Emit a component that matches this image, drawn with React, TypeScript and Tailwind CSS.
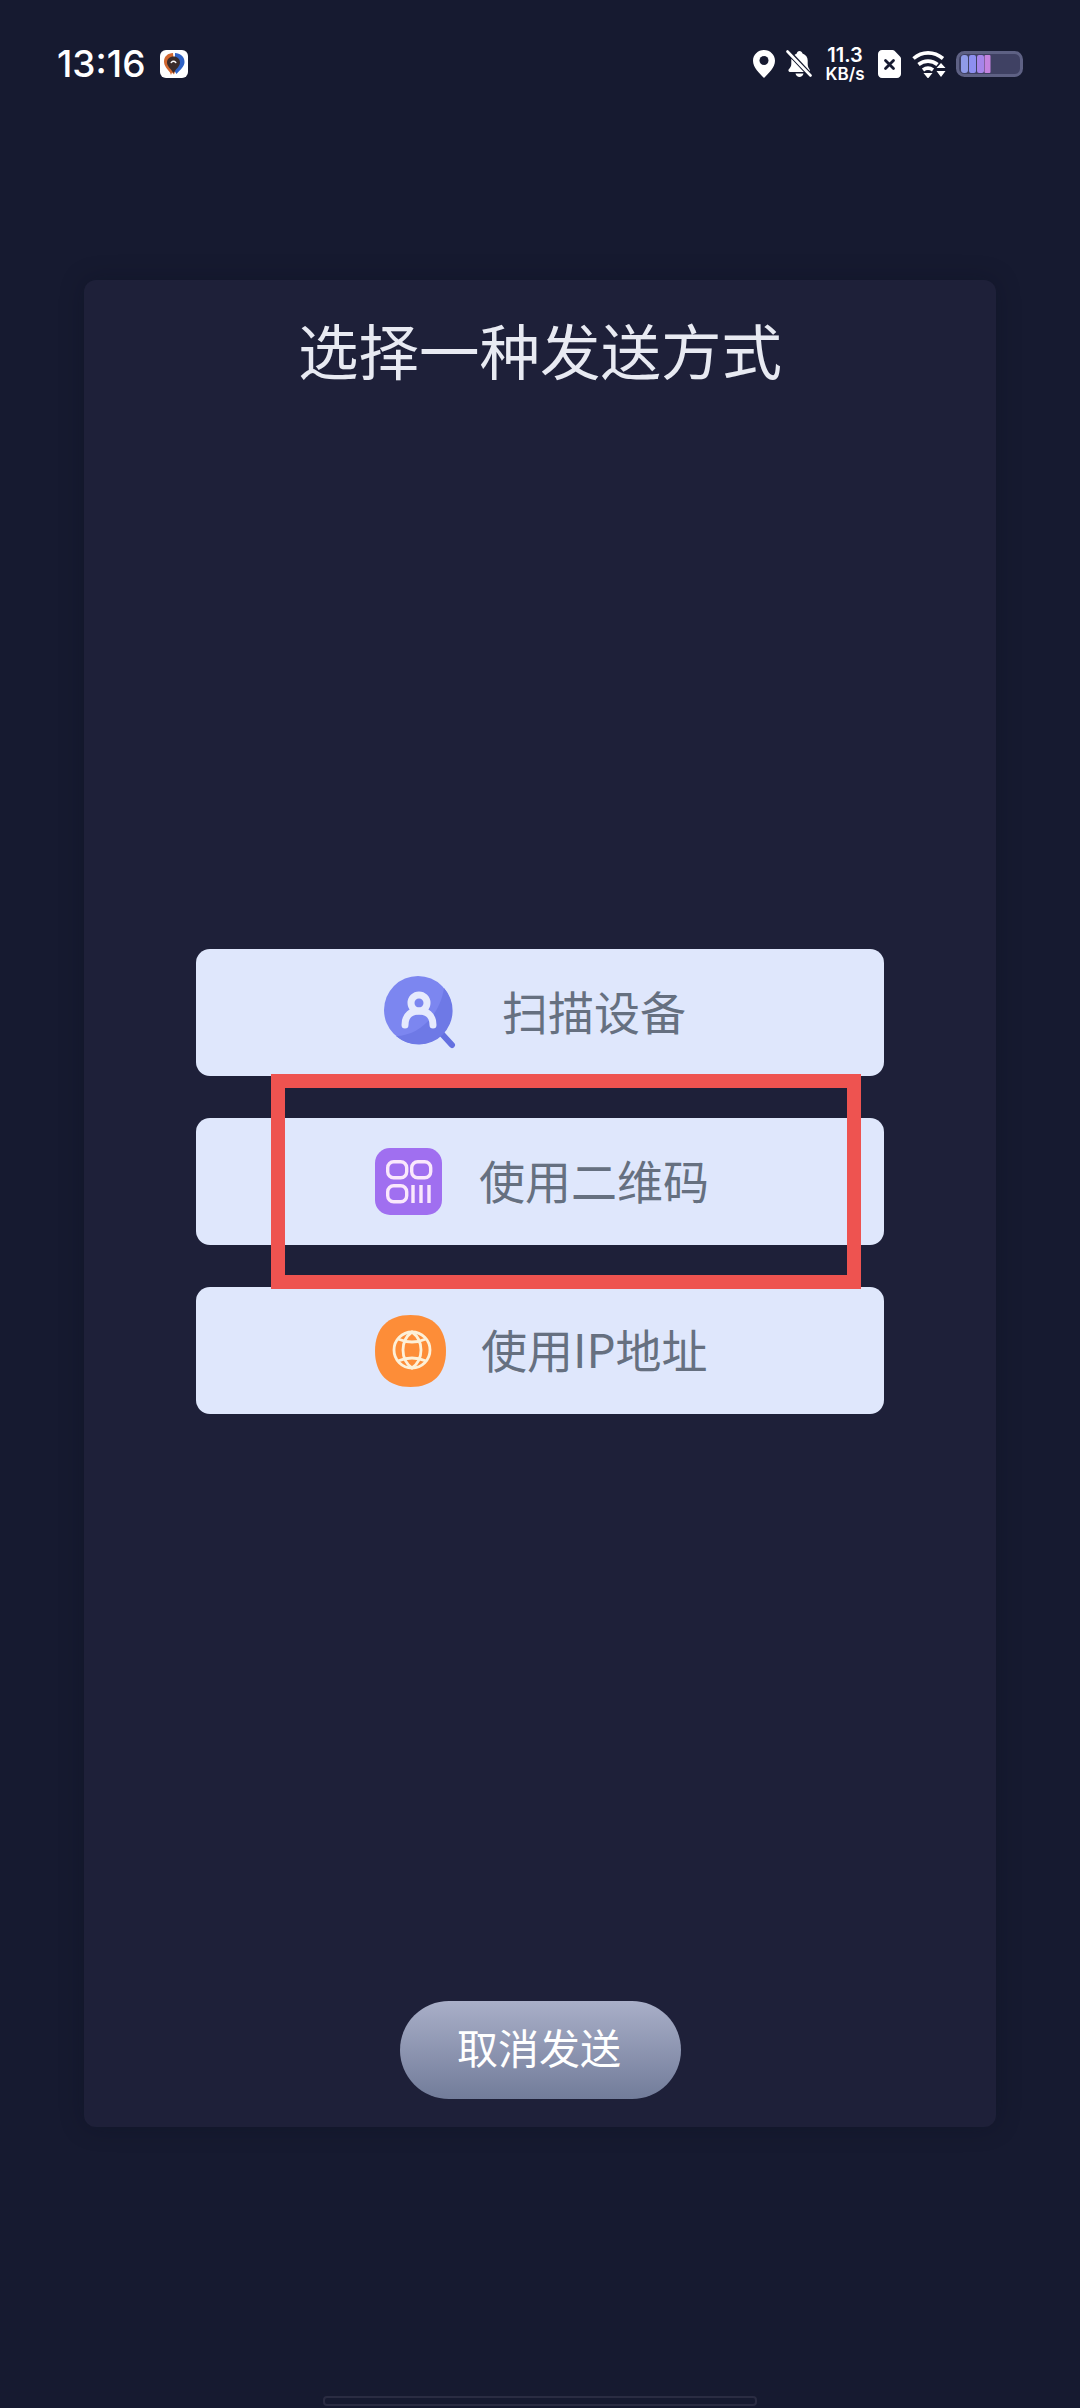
const cjk = "font-['Noto_Sans_CJK_SC','Noto_Sans',sans-serif]";

function AppBadge() {
  return (
    <svg width="28" height="28" viewBox="0 0 28 28">
      <rect width="28" height="28" rx="6" fill="#fff" />
      <path d="M15 3c5 0 9.500 3.500 9.500 9 0 4.500-4.500 8-8 12l-2-3z" fill="#2f62c4" />
      <path d="M13 3C8 3 4 6.500 4 11.500c0 4.500 3.500 7.500 6 11l1 2.500 1-2.500 2 2 1-3z" fill="#d2672f" />
      <path d="M13.500 6.500c3.800 0 6.500 2.500 6.500 6 0 3.500-3.500 6-5 8.500l-1.500 2-1.500-2c-1.500-2.500-5-5-5-8.500 0-3.500 2.700-6 6.500-6z" fill="#3a2c2a" />
      <path d="M11.200 12.500c1.500-1.500 3.100-1.500 4.600 0" fill="none" stroke="#fff" strokeWidth="1.400" strokeLinecap="round" />
    </svg>
  );
}

function PinIcon() {
  return (
    <svg width="22" height="28" viewBox="0 0 22 28">
      <path d="M11 0C4.900 0 0 4.800 0 10.800 0 17.500 6.500 23.500 11 28c4.500-4.500 11-10.500 11-17.200C22 4.800 17.100 0 11 0z" fill="#fff" />
      <circle cx="11" cy="10.500" r="4.500" fill="#161a30" />
    </svg>
  );
}

function BellOffIcon() {
  return (
    <svg width="26" height="28" viewBox="0 0 26 28">
      <path d="M13.500 1c-1.500 0-2.500 1-2.700 2.400C9.500 4 8.500 4.800 7.500 5.800l16 16c.5-.7.500-1.700 0-2.400-.9-1.300-1.800-2.800-1.800-5.400V10.500c0-3.200-1.700-5.900-5.200-7.100C16 2 15 1 13.500 1z" fill="#fff" />
      <path d="M5.600 8.500c-.2.600-.3 1.300-.3 2V14c0 2.400-1.300 3.900-2.500 5.300-.9 1-.2 2.700 1.200 2.700h14.600zM9.500 23.500c.5 2 2.100 3.500 4 3.500s3.500-1.500 4-3.500z" fill="#fff" />
      <path d="M1.500 1 25 26" stroke="#161a30" strokeWidth="5" />
      <path d="M1.500 1.500 24.500 25.500" stroke="#fff" strokeWidth="2.600" strokeLinecap="round" />
    </svg>
  );
}

function SimIcon() {
  return (
    <svg width="23" height="28" viewBox="0 0 23 28">
      <path d="M4 0h10.500c.8 0 1.500.3 2 .8l5.500 5.700c.6.500 1 1.300 1 2V24c0 2.200-1.800 4-4 4H4c-2.200 0-4-1.800-4-4V4c0-2.200 1.800-4 4-4z" fill="#fff" />
      <path d="M7.500 10.500l8 8M15.500 10.500l-8 8" stroke="#161a30" strokeWidth="2.800" strokeLinecap="round" />
    </svg>
  );
}

function WifiIcon() {
  return (
    <svg width="34" height="28" viewBox="0 0 34 28">
      <g fill="none" stroke="#fff" strokeWidth="3.600">
        <path d="M1.500 8.500C10 1 22 1 31 8.500" />
        <path d="M6.500 14.500C12 10 20 10 25.500 14.500" />
        <path d="M11 20c3-2.300 7-2.300 10 0" />
      </g>
      <path d="M11.500 23h9L16 28.500zM29 13l4.500 5h-9zM24.500 21h9L29 27z" fill="#fff" />
    </svg>
  );
}

function BatteryIcon() {
  return (
    <svg width="67" height="26" viewBox="0 0 67 26">
      <rect x="1.500" y="1.500" width="64" height="23" rx="7" fill="#3f4163" stroke="#5e6184" strokeWidth="3" />
      <rect x="5" y="4" width="7" height="18" rx="3" fill="#8f9be8" />
      <rect x="13" y="4" width="7" height="18" rx="2" fill="#8d8ff0" />
      <rect x="21" y="4" width="7" height="18" rx="2" fill="#a685ea" />
      <rect x="28.500" y="4" width="6" height="18" rx="1" fill="#c583df" />
    </svg>
  );
}

function ScanIcon() {
  return (
    <svg width="72" height="74" viewBox="0 0 72 74">
      <path d="M57 57 68 69" stroke="#6470e0" strokeWidth="6" strokeLinecap="round" />
      <circle cx="34" cy="34" r="34" fill="#7c86f0" />
      <path d="M60 12A34 34 0 0 1 12 60C34 60 56 40 60 12z" fill="#6e79e6" />
      <circle cx="35" cy="27" r="8" fill="none" stroke="#e6eafd" strokeWidth="7" />
      <path d="M21 49C21 38 28 35 35 35S49 38 49 49" fill="none" stroke="#e6eafd" strokeWidth="7" strokeLinecap="round" />
    </svg>
  );
}

function QrIcon() {
  return (
    <svg width="67" height="67" viewBox="0 0 67 67">
      <rect width="67" height="67" rx="15" fill="#a06ff0" />
      <g fill="none" stroke="#fae8fc" strokeWidth="3.400">
        <rect x="12.700" y="13.700" width="19" height="16" rx="6" />
        <rect x="36.700" y="13.700" width="19" height="16" rx="6" />
        <rect x="12.700" y="37.700" width="19" height="16" rx="6" />
        <path d="M38 37v18M46 37v18M54 37v18" />
      </g>
    </svg>
  );
}

function GlobeIcon() {
  return (
    <svg width="71" height="72" viewBox="0 0 71 72">
      <path d="M35.500 0C58 0 71 13 71 36S58 72 35.500 72 0 59 0 36 13 0 35.500 0z" fill="#fd8d38" />
      <g fill="none" stroke="#fdf0d8" strokeWidth="2.800">
        <circle cx="37" cy="35" r="18" />
        <path d="M37 17C30 22 28 28 28 35s2 13 9 18C44 48 46 42 46 35s-2-13-9-18z" />
        <path d="M23 24Q37 30 51 24M23 46Q37 40 51 46" />
      </g>
    </svg>
  );
}

const options = [
  { label: "扫描设备", icon: <ScanIcon />, row: "pl-[188px] gap-[46px]" },
  { label: "使用二维码", icon: <QrIcon />, row: "pl-[179px] gap-[37px]" },
  { label: "使用IP地址", icon: <GlobeIcon />, row: "pl-[179px] gap-[35px]" },
];

export default function App() {
  return (
    <div className={`flex h-[2408px] w-[1080px] flex-col overflow-hidden bg-[#161a30] ${cjk}`}>
      {/* Status bar */}
      <div className="flex h-[78px] items-start justify-between px-[57px] pt-[50px]">
        <div className="flex h-[28px] items-center gap-[15px]">
          <span className="font-['Inter',sans-serif] text-[37px] leading-[28px] font-medium text-white">13:16</span>
          <AppBadge />
        </div>
        <div className="flex h-[28px] items-center">
          <PinIcon />
          <div className="ml-[11px]"><BellOffIcon /></div>
          <div className="ml-[14px] flex w-[38px] flex-col items-center font-['Inter',sans-serif] font-semibold text-white">
            <span className="text-[20px] leading-[20px]">11.3</span>
            <span className="text-[17px] leading-[18px]">KB/s</span>
          </div>
          <div className="ml-[14px]"><SimIcon /></div>
          <div className="ml-[11px]"><WifiIcon /></div>
          <div className="ml-[10px]"><BatteryIcon /></div>
        </div>
      </div>

      {/* Dialog panel */}
      <div className="relative mx-[84px] mt-[202px] flex h-[1847px] flex-col items-center rounded-[12px] bg-[#1e2039] pt-[37px] pb-[28px] shadow-[0_0_24px_rgba(8,10,25,0.25)]">
        <h1 className="text-[60.5px] leading-[64px] font-normal text-[#e8eaf2]">选择一种发送方式</h1>

        <div className="mt-[568px] flex w-[688px] flex-col gap-[42px]">
          {options.map((o) => (
            <div key={o.label} className={`flex h-[127px] items-center rounded-[14px] bg-[#dfe7fc] ${o.row}`}>
              {o.icon}
              <span className="pb-[6px] text-[46px] leading-[60px] text-[#667080]">{o.label}</span>
            </div>
          ))}
        </div>

        {/* Highlight frame from the annotated screenshot */}
        <div className="absolute top-[794px] left-[187px] h-[215px] w-[590px] border-[14px] border-[#ee5350]" />

        <button className="mt-auto flex h-[98px] w-[281px] items-center justify-center rounded-full bg-gradient-to-b from-[#a9afc8] to-[#727c9a] pr-[2px] pb-[6px] text-[41px] text-white">
          取消发送
        </button>
      </div>

      {/* Home indicator */}
      <div className="mx-auto mt-auto mb-[2px] h-[10px] w-[434px] rounded-[4px] border-2 border-[#2a2c42]" />
    </div>
  );
}
